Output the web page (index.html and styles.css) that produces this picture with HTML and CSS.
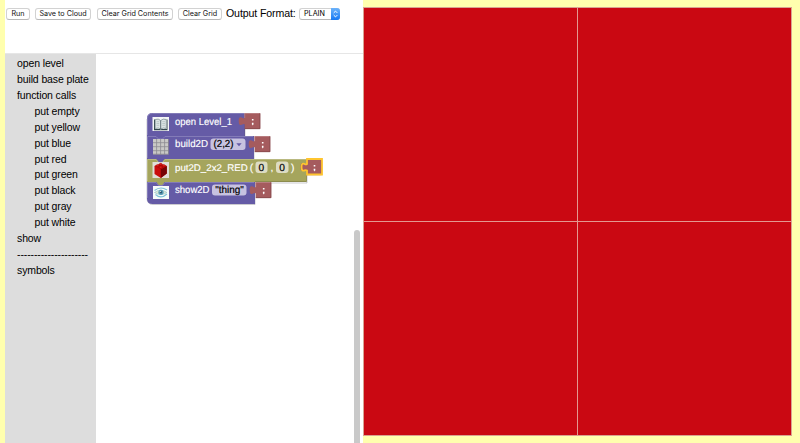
FILE: index.html
```html
<!DOCTYPE html>
<html lang="en">
<head>
<meta charset="utf-8">
<title>Grid Builder</title>
<link rel="stylesheet" href="styles.css">
</head>
<body>
<div class="app">
  <section class="editor">
    <header class="toolbar">
      <button class="btn run">Run</button>
      <button class="btn save">Save to Cloud</button>
      <button class="btn contents">Clear Grid Contents</button>
      <button class="btn clear">Clear Grid</button>
      <span class="label">Output Format:</span>
      <div class="select"><span>PLAIN</span>
        <svg class="arrows" width="9" height="11" viewBox="0 0 9 11"><path d="M2.7 4.4 4.5 2.6 6.3 4.4M2.7 6.6 4.5 8.4 6.3 6.6"/></svg>
      </div>
    </header>
    <div class="workspace">
      <nav class="toolbox">
        <div>open level</div>
        <div>build base plate</div>
        <div>function calls</div>
        <div class="sub">put empty</div>
        <div class="sub">put yellow</div>
        <div class="sub">put blue</div>
        <div class="sub">put red</div>
        <div class="sub">put green</div>
        <div class="sub">put black</div>
        <div class="sub">put gray</div>
        <div class="sub">put white</div>
        <div>show</div>
        <div class="rule">---------------------</div>
        <div>symbols</div>
      </nav>
      <main class="canvas">
        <svg class="blocks" width="190" height="104" viewBox="140 106 190 104">
          <defs>
            <g id="plug">
              <path class="red" d="M0 0H15.5V16H0V11.5C-2 10-2.500 13-5 11.800C-6.300 11-6.300 5-5 4.500C-2.500 3.500-2 6.500 0 5Z"/>
              <path class="lite" d="M0 5V.5H15"/>
              <path class="dark" d="M15.200.5V15.700H.2"/>
              <path class="semi" d="M7.200 5.900h1.600v1.500h-1.600zM7.200 9.700h1.600v1.700l-1.200 1.200v-1.200h-.4z"/>
            </g>
          </defs>
          <path class="shadow" d="M147 119v79q0 6.500 6 6.500H255V183H307V160H254V137H245V113.500"/>
          <path class="violet" d="M152.500 113H244.500V136H254V159H147V118.500Q147 113 152.500 113Z"/>
          <path class="olive" d="M147 159H306.500V182H147Z"/>
          <path class="violet" d="M147 182H255V204H152.500Q147 204 147 198.500Z"/>
          <path class="violet" d="M156 158.500H165L162.500 162H158.500Z"/>
          <path class="olive" d="M156 181.500H165L162.500 185H158.500Z"/>
          <path class="lite" d="M147.500 135V118.500Q147.500 113.500 152.500 113.500H244M147.500 158V136.500H156L158.500 139H162.500L165 136.500H253"/>
          <path class="lite" d="M147.500 198V182.500H156L158.500 185.500H162.500L165 182.500H254"/>
          <path class="olite" d="M147.500 181V159.500H156L158.500 162.500H162.500L165 159.500H306"/>
          <path class="dark" d="M244.500 114V136M254V137V158.500M254.500 183V203.500H153"/>
          <path class="odark" d="M306.500 160V181.500H255"/>

          <rect x="152.500" y="117" width="16.500" height="14" fill="#f4f6f7"/>
          <path d="M154 119.500h1v9.500h5.200l.6.700.6-.7h5.300v-9.500h.8v10.700h-13.500z" fill="#32454b"/>
          <path d="M155.200 119.500Q158.500 118.300 160.700 120.500Q163 118.300 166.300 119.500V128.500Q163 127.300 160.700 129Q158.500 127.300 155.200 128.500Z" fill="#dce5e5" stroke="#73868a" stroke-width=".7"/>
          <path d="M160.700 120.500V129" stroke="#40535a" stroke-width=".8"/>
          <path d="M156.500 121.700h2.700M156.500 123.500h2.700M156.500 125.300h2.700M162.300 121.700h2.700M162.300 123.500h2.700M162.300 125.300h2.700" stroke="#a5b1b2" stroke-width=".6"/>

          <rect x="153" y="139" width="15.500" height="15.500" fill="#c9c9c6"/>
          <path d="M156.600 139v15.500M160.600 139v15.500M164.600 139v15.500M153 142.700h15.500M153 146.700h15.500M153 150.700h15.500" stroke="#8b8a90" stroke-width=".8"/>
          <path d="M153 154.200h15.500V139" fill="none" stroke="#77747c" stroke-width=".6"/>

          <rect x="152.500" y="162" width="16.500" height="16" fill="#e0ded8"/>
          <path d="M154.500 166 160.500 163.800 166.800 166V173.500L160.800 178 154.500 174Z" fill="#c90d0c"/>
          <path d="M160.800 169.300 166.800 166V173.500L160.800 178Z" fill="#760405"/>
          <path d="M154.500 166 160.500 163.800 166.800 166 160.800 169.300Z" fill="#b80807"/>
          <g fill="#e62520" stroke="#8d0505" stroke-width=".3"><ellipse cx="157.500" cy="165.500" rx="1.400" ry=".9"/><ellipse cx="160.700" cy="164" rx="1.400" ry=".9"/><ellipse cx="163.900" cy="165.500" rx="1.400" ry=".9"/><ellipse cx="160.700" cy="167.100" rx="1.400" ry=".9"/></g>

          <rect x="153" y="186" width="16" height="13" fill="#f8fbfb"/>
          <path d="M154.500 190.500Q160.500 185.800 167 190M155.500 194.500Q161 199.500 167 194" fill="none" stroke="#7dc2d6" stroke-width="1.100"/>
          <path d="M154.500 192.500Q160.500 187.800 167 192.500Q161 196.700 154.500 192.500Z" fill="#dbe8d6" stroke="#8dbec6" stroke-width=".6"/>
          <circle cx="161" cy="192.300" r="2.600" fill="#5799b4"/><circle cx="161" cy="192.300" r="1.100" fill="#2b566c"/>
          <circle cx="160.300" cy="191.500" r=".6" fill="#fff"/>

          <rect class="field" x="210.500" y="138.500" width="35" height="11.500" rx="3"/>
          <rect class="field" x="212" y="184.500" width="34.500" height="11" rx="3"/>
          <rect class="ofield" x="255.500" y="161.500" width="12" height="11.500" rx="3"/>
          <rect class="ofield" x="276" y="161.500" width="12.500" height="11.500" rx="3"/>
          <path d="M236.300 143.200h5.400l-2.700 3z" fill="#655ba6"/>

          <g class="white">
            <text x="175" y="124.500" textLength="57" lengthAdjust="spacingAndGlyphs">open Level_1</text>
            <text x="175" y="147.300" textLength="33" lengthAdjust="spacingAndGlyphs">build2D</text>
            <text class="long" x="175" y="170.500">put2D_2x2_RED</text>
            <text x="249.700" y="170.500">(</text>
            <text x="270.500" y="170.500">,</text>
            <text x="291" y="170.500">)</text>
            <text x="175" y="193.300" textLength="34.500" lengthAdjust="spacingAndGlyphs">show2D</text>
          </g>
          <g class="black">
            <text x="213.500" y="147.300" textLength="20" lengthAdjust="spacingAndGlyphs">(2,2)</text>
            <text x="258.600" y="170.500">0</text>
            <text x="279.300" y="170.500">0</text>
            <text x="215.300" y="193.300" textLength="28.500" lengthAdjust="spacingAndGlyphs">"thing"</text>
          </g>
          <use href="#plug" x="244.700" y="113"/>
          <use href="#plug" x="254.700" y="136"/>
          <use href="#plug" x="306.500" y="159"/>
          <use href="#plug" x="255.700" y="182"/>
          <path class="selected" d="M307 159H322V174.500H307V170.500C305 169 304.500 171.500 302.500 170.500C301.200 169.500 301.200 164.500 302.500 163.800C304.500 162.800 305 165.500 307 164Z"/>
        </svg>
        <div class="track"><div class="thumb"></div></div>
      </main>
    </div>
  </section>
  <section class="plate">
    <div></div><div></div><div></div><div></div>
  </section>
</div>
</body>
</html>
```
FILE: styles.css
```css
* { box-sizing: border-box; }
body {
  margin: 0;
  height: 443px;
  overflow: hidden;
  background: #ffffae;
  font-family: "Liberation Sans", Arial, sans-serif;
  color: #000;
}
.app { display: flex; height: 443px; padding-left: 5px; }
.editor { width: 358px; height: 443px; background: #fff; display: flex; flex-direction: column; }
.toolbar { display: flex; flex: none; align-items: flex-start; height: 53px; padding: 8px 0 0 1px; white-space: nowrap; }
.btn {
  height: 12px;
  margin: 0 5px 0 0;
  padding: 0;
  border: 1px solid #d2d2d2;
  border-bottom-color: #b8b8b8;
  border-radius: 3px;
  background: #fff;
  font: 7.2px/10px Inter, "Liberation Sans", sans-serif;
  color: #111;
}
.run { width: 24px; }
.save { width: 56px; margin-right: 6px; }
.contents { width: 76px; }
.clear { width: 44px; margin-right: 4px; }
.label { width: 73px; margin-top: -2px; font-size: 10.6px; letter-spacing: -0.12px; line-height: 14px; }
.select {
  display: flex;
  width: 40.5px;
  height: 12px;
  border: 1px solid #d2d2d2;
  border-right: 0;
  border-bottom-color: #b8b8b8;
  border-radius: 3px;
  font: 7.2px/10px Inter, "Liberation Sans", sans-serif;
}
.select span { flex: 1; padding-left: 4px; }
.arrows { margin-top: -1px; height: 12px; border-radius: 0 3px 3px 0; background: linear-gradient(#6db3fa, #1678f4); }
.arrows path { fill: none; stroke: #fff; stroke-width: 1; }
.workspace { display: flex; flex: 1; border-top: 1px solid #e6e6e6; }
.toolbox {
  width: 91px;
  padding: 2px 0 0 12px;
  background: #ddd;
  font-size: 10.5px;
  letter-spacing: -0.12px;
  line-height: 15.92px;
  white-space: nowrap;
}
.sub { padding-left: 17.5px; }
.canvas { display: flex; justify-content: space-between; flex: 1; }
.blocks { margin: 52px 0 0 43.7px; text-rendering: geometricPrecision; }
.track { width: 9px; padding: 176px 2px 0 0; }
.thumb { width: 6px; height: 213px; border-radius: 3px 3px 0 0; background: #c9c9c9; }
.plate {
  display: grid;
  grid-template-columns: 214px 214px;
  grid-template-rows: 214px 214px;
  gap: 1px;
  width: 429px;
  height: 429px;
  margin-top: 7px;
  background: #e49890;
  outline: 1px solid #d9a392;
  outline-offset: -1px;
}
.plate div { background: #ca0812; }
.violet { fill: #655ba6; }
.olive { fill: #a5a55d; }
.red { fill: #a55b5e; }
.lite, .olite, .dark, .odark { fill: none; stroke-width: .8; }
.lite { stroke: #8c84bd; }
.olite { stroke: #bebe89; }
.dark { stroke: #51458b; }
.odark { stroke: #85854b; }
#plug .lite { stroke: #bd8588; }
#plug .dark { stroke: #84484b; }
.semi { fill: #fff; }
.shadow { fill: none; stroke: #46434f; stroke-opacity: .35; stroke-width: .8; }
.field { fill: #c7c2e0; }
.ofield { fill: #dddcc3; }
.white, .black { font: 10.2px "Liberation Sans", Arial, sans-serif; }
.long { font-size: 9.7px; }
.white { fill: #fff; stroke: #fff; stroke-width: .15; }
.black { fill: #000; stroke: #000; stroke-width: .2; }
.selected { fill: none; stroke: #ffc52f; stroke-width: 1.8; }
```
